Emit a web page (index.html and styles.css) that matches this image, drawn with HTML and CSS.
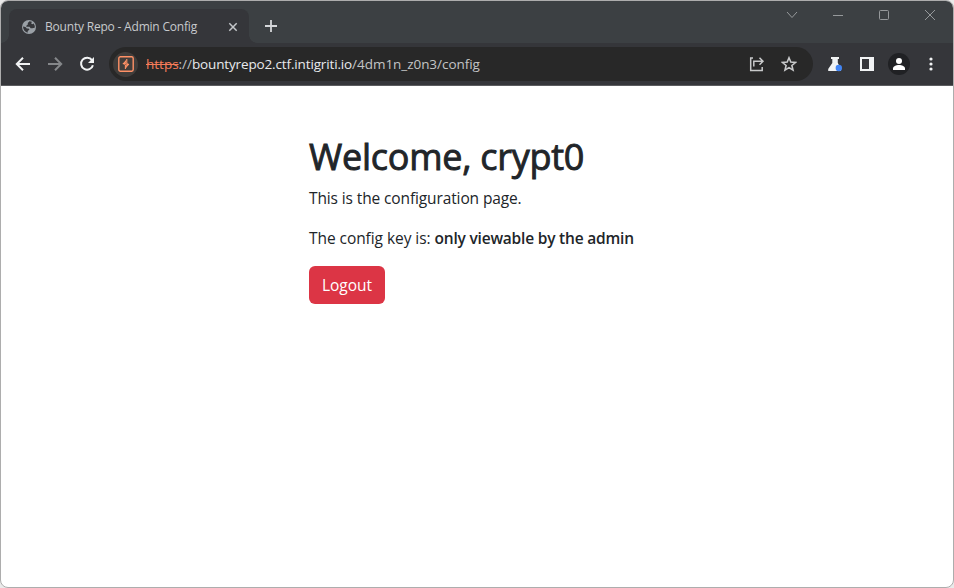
FILE: index.html
```html
<!DOCTYPE html>
<html lang="en">
<head>
<meta charset="utf-8">
<title>Bounty Repo - Admin Config</title>
<link rel="stylesheet" href="styles.css">
</head>
<body>
<div class="window">
  <header class="tabstrip">
    <div class="tab">
      <svg class="globe" width="16" height="16" viewBox="0 0 16 16"><circle cx="8" cy="8" r="7" fill="#9aa0a6"/><path d="M8.5 2.200 6.800 4v1.600L5.300 6.800v1h3.200l1.200 1.500h1.600l2.400-.6a6 6 0 0 0-1-4.300l-1.500.8-1-.7.7-1.700A6 6 0 0 0 8.500 2.200zM2 7.600c0 3 1.900 5.300 4.500 6.200l.3-1.700 1.700-1.500-1-1.200H5.800L4.500 8z" fill="#35363a"/></svg>
      <span class="tab-title">Bounty Repo - Admin Config</span>
      <svg class="tab-close" width="10" height="10" viewBox="0 0 10 10"><path d="M1.300 1.300l7.400 7.400M8.700 1.300L1.300 8.700" stroke="#c4c7ca" stroke-width="1.500"/></svg>
    </div>
    <svg class="new-tab" width="14" height="14" viewBox="0 0 14 14"><path d="M7 1v12M1 7h12" stroke="#d5d7da" stroke-width="1.800"/></svg>
    <div class="controls">
      <svg width="12" height="12" viewBox="0 0 12 12"><path d="M1 3l5 5.500L11 3"/></svg>
      <svg width="12" height="12" viewBox="0 0 12 12"><path d="M1 6.500h10"/></svg>
      <svg width="12" height="12" viewBox="0 0 12 12"><rect x="1.500" y="1.500" width="9" height="9" rx="1"/></svg>
      <svg width="12" height="12" viewBox="0 0 12 12"><path d="M1 1l10 10M11 1L1 11"/></svg>
    </div>
  </header>
  <div class="toolbar">
    <svg class="nav" width="16" height="16" viewBox="0 0 16 16"><path d="M15 8H2.500M8 1.800L1.800 8 8 14.200" stroke="#f1f3f4"/></svg>
    <svg class="nav" width="16" height="16" viewBox="0 0 16 16"><path d="M1 8h12.500M8 1.800L14.200 8 8 14.200" stroke="#85878a"/></svg>
    <svg class="nav" width="16" height="16" viewBox="0 0 16 16"><path d="M13 4.200A6 6 0 1 0 13.900 9.200" stroke="#f1f3f4"/><path d="M15 1v6H9z" fill="#f1f3f4"/></svg>
    <div class="omnibox">
      <span class="site"><svg width="16" height="16" viewBox="0 0 16 16"><rect x=".8" y=".8" width="14.400" height="14.400" rx="1.600" fill="none" stroke="#ff9166" stroke-width="1.400"/><path d="M8.800 3v4L4.800 7.600M7.400 13V9.300l3.600-.9" fill="none" stroke="#ff9166" stroke-width="1.100"/><path d="M8.800 3L4.800 7.800 7 9zM7.400 13L11 8.200 9 7z" fill="#ff9166"/></svg></span>
      <div class="url"><span class="scheme">https</span><span class="path">://</span><span class="host">bountyrepo2.ctf.intigriti.io</span><span class="path">/4dm1n_z0n3/config</span></div>
      <svg class="share" width="16" height="16" viewBox="0 0 16 16"><path d="M4 2H1.700v12.500h11.500V11M4.800 10.500V5.300h8.700M10.500 1.800L14 5.300l-3.500 3.500" fill="none" stroke="#c8c9ca" stroke-width="1.500"/></svg>
      <svg class="star" width="16" height="16" viewBox="0 0 16 16"><path d="M8 1.800l1.800 4.300 4.700.4-3.600 3 1.100 4.600-4-2.500-4 2.500 1.100-4.600-3.600-3 4.700-.4z" fill="none" stroke="#c8c9ca" stroke-width="1.600"/></svg>
    </div>
    <svg class="flask" width="16" height="16" viewBox="0 0 16 16"><path d="M4 1h8v2h-1.200v4L14 12.500V15H1.200v-2L5.300 7V3H4z" fill="#f1f3f4"/><circle cx="11.800" cy="12" r="3.200" fill="#4285f4"/></svg>
    <svg class="panel" width="14" height="14" viewBox="0 0 14 14"><path d="M0 0h14v14H0zM2 2v10h7V2z" fill="#f1f3f4" fill-rule="evenodd"/></svg>
    <svg class="avatar" width="22" height="22" viewBox="0 0 22 22"><circle cx="11" cy="11" r="11" fill="#202124"/><circle cx="11" cy="8" r="3" fill="#fff"/><path d="M5 17v-1.500C5 13.300 8 12 11 12s6 1.300 6 3.500V17z" fill="#fff"/></svg>
    <svg class="menu" width="4" height="14" viewBox="0 0 4 14"><g fill="#f1f3f4"><circle cx="2" cy="2" r="1.600"/><circle cx="2" cy="7" r="1.600"/><circle cx="2" cy="12" r="1.600"/></g></svg>
  </div>
  <main>
    <h1>Welcome, crypt0</h1>
    <p class="intro">This is the configuration page.</p>
    <p class="key"><span>The config key is: </span><strong>only viewable by the admin</strong></p>
    <button type="button"><span>Logout</span></button>
  </main>
</div>
</body>
</html>
```
FILE: styles.css
```css
* { box-sizing: border-box; }
body { margin: 0; background: #eaeaea; font-family: "Open Sans", sans-serif; overflow: hidden; }
svg { display: block; flex: none; }
.window { width: 954px; height: 588px; border: 1px solid #adadad; border-radius: 8px; overflow: hidden; background: #fff; }
.tabstrip { height: 42px; display: flex; background: #3c4043; }
.tab { position: relative; width: 240px; height: 34px; margin: 8px 0 0 8px; padding: 1px 11px 0 12px; border-radius: 8px 8px 0 0; background: #35363a; display: flex; align-items: center; }
.tab::before, .tab::after { content: ""; position: absolute; bottom: 0; width: 8px; height: 8px; }
.tab::before { left: -8px; background: radial-gradient(circle at 0 0, transparent 7.500px, #35363a 8px); }
.tab::after { right: -8px; background: radial-gradient(circle at 100% 0, transparent 7.500px, #35363a 8px); }
.tab-title { margin-left: 8px; flex: 1; font-size: 12px; letter-spacing: -0.2px; line-height: 16px; color: #c7cacd; white-space: nowrap; }
.new-tab { margin: 18px 0 0 15px; }
.controls { display: flex; gap: 34px; margin: 8px 17px 0 auto; }
.controls svg { fill: none; stroke: #96999b; stroke-width: 1; }
.toolbar { height: 43px; background: #35363a; border-bottom: 1px solid #5b5c5f; display: flex; align-items: center; padding-left: 14px; }
.nav { margin-right: 16px; fill: none; stroke-width: 2; }
.omnibox { width: 704px; height: 34px; margin-left: -2px; border-radius: 17px; background: #282828; display: flex; align-items: center; padding: 0 16px 0 4px; }
.site { width: 25px; height: 25px; border-radius: 50%; background: #403d3b; display: flex; align-items: center; justify-content: center; }
.url { margin-left: 8px; flex: 1; font-size: 13.500px; line-height: 20px; white-space: nowrap; }
.scheme { color: #f77c59; text-decoration: line-through; }
.path { color: #c3c4c5; letter-spacing: -0.04px; }
.host { color: #e8eaed; letter-spacing: -0.14px; }
.star { margin-left: 16px; }
.flask { margin-left: 14px; }
.panel { margin-left: 17px; }
.avatar { margin-left: 14px; }
.menu { margin-left: 19px; }
main { width: 336px; margin: 47px 0 0 308px; color: #212529; }
h1 { margin: 0 0 5px; font-size: 36px; line-height: 48px; font-weight: 500; letter-spacing: -0.26px; -webkit-text-stroke: 0.9px #212529; white-space: nowrap; }
p { margin: 0 0 16px; font-size: 15.500px; letter-spacing: -0.12px; line-height: 24px; white-space: nowrap; }
.key span { letter-spacing: -0.06px; }
strong { font-weight: 600; letter-spacing: -0.2px; }
button { display: flex; align-items: center; justify-content: center; width: 76px; height: 38px; padding: 0; border: 0; border-radius: 6px; background: #dc3545; color: #fff; font: 15.500px/24px "Open Sans", sans-serif; }
```
